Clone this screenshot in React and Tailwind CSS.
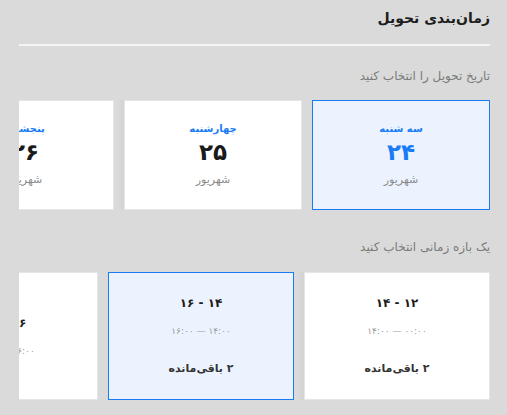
import React from "react";

const dates = [
  { day: "سه شنبه", num: "۲۴", month: "شهریور", selected: true },
  { day: "چهارشنبه", num: "۲۵", month: "شهریور" },
  { day: "پنجشنبه", num: "۲۶", month: "شهریور" },
];

const slots = [
  { range: "۱۲ - ۱۴", time: "۰۰:۰۰ — ۱۴:۰۰", left: "۲ باقی‌مانده" },
  { range: "۱۴ - ۱۶", time: "۱۴:۰۰ — ۱۶:۰۰", left: "۲ باقی‌مانده", selected: true },
  { range: "۱۶ - ۱۸", time: "۱۶:۰۰ — ۱۸:۰۰" },
];

export default function App() {
  return (
    <div
      dir="rtl"
      className="min-h-screen w-full bg-[#d9dad9] pl-[19px] pr-[17px] pt-[7px]"
      style={{ fontFamily: '"DejaVu Sans", "Noto Sans", sans-serif' }}
    >
      <h2 className="text-[14px] font-bold leading-[22px] text-[#1d1d1d]">زمان‌بندی تحویل</h2>
      <div className="mt-[15px] h-[2px] bg-[#f4f4f4]" />
      <p className="mt-[21px] text-[12px] leading-[18px] text-[#7a7a7a]">تاریخ تحویل را انتخاب کنید</p>
      <div className="mt-[15px] flex gap-[10px] overflow-hidden">
        {dates.map((d, i) => (
          <div
            key={i}
            className={
              d.selected
                ? "flex h-[110px] w-[178px] shrink-0 flex-col items-center justify-center border border-[#1a7cf5] bg-[#ecf3fe]"
                : "flex h-[110px] w-[178px] shrink-0 flex-col items-center justify-center border border-[#e6e6e6] bg-white shadow-[-3px_0_4px_rgba(0,0,0,0.04)]"
            }
          >
            <div className="text-[10px] font-bold leading-[14px] text-[#1a7cf5]">{d.day}</div>
            <div
              className={
                d.selected
                  ? "mt-[2px] text-[23px] font-extrabold leading-[28px] text-[#1a7cf5]"
                  : "mt-[2px] text-[23px] font-extrabold leading-[28px] text-[#1a1a1a]"
              }
            >
              {d.num}
            </div>
            <div className="mt-[6px] text-[11px] leading-[16px] text-[#8a8a8a]">{d.month}</div>
          </div>
        ))}
      </div>
      <p className="mt-[28px] text-[12px] leading-[18px] text-[#7a7a7a]">یک بازه زمانی انتخاب کنید</p>
      <div className="mt-[16px] flex gap-[10px] overflow-hidden">
        {slots.map((s, i) => (
          <div
            key={i}
            className={
              s.selected
                ? "flex h-[128px] w-[186px] shrink-0 flex-col items-center justify-center border border-[#1a7cf5] bg-[#ecf3fe]"
                : "flex h-[128px] w-[186px] shrink-0 flex-col items-center justify-center border border-[#e6e6e6] bg-white shadow-[-3px_0_4px_rgba(0,0,0,0.04)]"
            }
          >
            <div className="text-[12px] font-bold leading-[18px] text-[#1d1d1d]">{s.range}</div>
            <div className="mt-[12px] text-[9px] leading-[14px] text-[#9a9a9a]">{s.time}</div>
            {s.left && (
              <div className="mt-[22px] text-[11px] font-bold leading-[18px] text-[#333]">{s.left}</div>
            )}
          </div>
        ))}
      </div>
    </div>
  );
}
